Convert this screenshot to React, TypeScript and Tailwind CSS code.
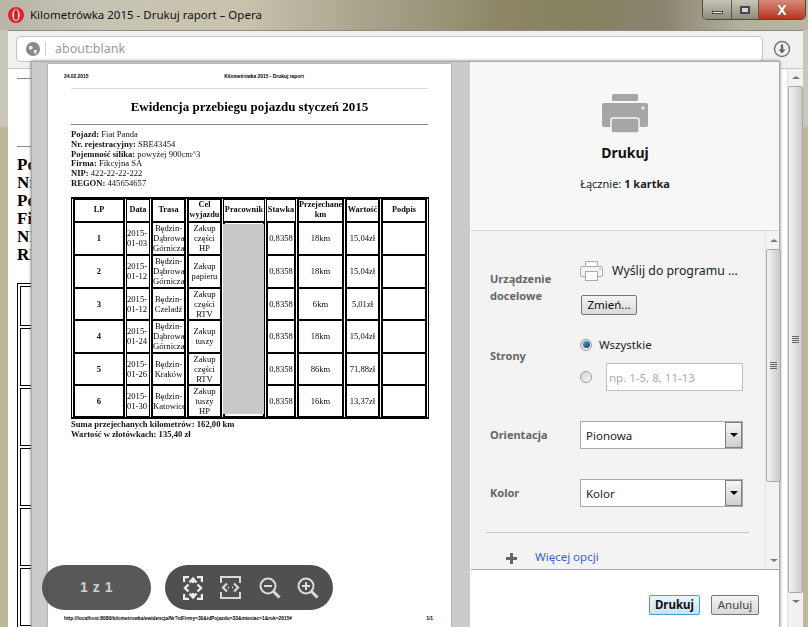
import React from "react";

const rows = [
  ["1", "2015-\n01-03", "Będzin-\nDąbrowa\nGórnicza", "Zakup\nczęści\nHP", "0,8358", "18km", "15,04zł", "h-[33px]"],
  ["2", "2015-\n01-12", "Będzin-\nDąbrowa\nGórnicza", "Zakup\npapieru", "0,8358", "18km", "15,04zł", "h-[33px]"],
  ["3", "2015-\n01-12", "Będzin-\nCzeladź", "Zakup\nczęści\nRTV", "0,8358", "6km", "5,01zł", "h-[32px]"],
  ["4", "2015-\n01-24", "Będzin-\nDąbrowa\nGórnicza", "Zakup\ntuszy", "0,8358", "18km", "15,04zł", "h-[33px]"],
  ["5", "2015-\n01-26", "Będzin-\nKraków", "Zakup\nczęści\nRTV", "0,8358", "86km", "71,88zł", "h-[32px]"],
  ["6", "2015-\n01-30", "Będzin-\nKatowice", "Zakup\ntuszy\nHP", "0,8358", "16km", "13,37zł", "h-[32px]"],
];

const cellCls = "border-x-2 border-y border-black p-0 text-center align-middle whitespace-pre leading-[10px]";
const dataCls = "border-x border-y border-black p-0 text-left align-middle whitespace-pre leading-[10px]";

function PreviewTable() {
  return (
    <div className="relative w-[358px]">
      <table className="w-[358px] table-fixed border-separate [border-spacing:1px_0] border-2 border-x border-black text-[8.6px] text-[#0a0a0a]">
        <colgroup>
          <col className="w-[52px]" />
          <col className="w-[24px]" />
          <col className="w-[35px]" />
          <col className="w-[35px]" />
          <col className="w-[42px]" />
          <col className="w-[30px]" />
          <col className="w-[47px]" />
          <col className="w-[35px]" />
          <col className="w-[46px]" />
        </colgroup>
        <thead>
          <tr className="h-[23px] text-[8.300px] font-bold">
            {["LP", "Data", "Trasa", "Cel\nwyjazdu", "Pracownik", "Stawka", "Przejechane\nkm", "Wartość", "Podpis"].map((h) => (
              <th key={h} className={h === "Data" || h === "Pracownik" || h === "Stawka" ? "border border-black p-0 text-center align-middle whitespace-pre leading-[10px]" : cellCls}>{h}</th>
            ))}
          </tr>
        </thead>
        <tbody>
          {rows.map((r) => (
            <tr key={r[0]} className={r[7]}>
              <td className={cellCls + " font-bold"}>{r[0]}</td>
              <td className={dataCls}>{r[1]}</td>
              <td className={cellCls}>{r[2]}</td>
              <td className={cellCls}>{r[3]}</td>
              <td className={cellCls}></td>
              <td className={cellCls}>{r[4]}</td>
              <td className={cellCls}>{r[5]}</td>
              <td className={cellCls}>{r[6]}</td>
              <td className={cellCls}></td>
            </tr>
          ))}
        </tbody>
      </table>
      <div className="absolute left-[152px] top-[27px] h-[190px] w-[41px] bg-[#c9c9c9] blur-[0.5px]" />
    </div>
  );
}

function FitIcon() {
  return (
    <svg width="20" height="24" viewBox="0 0 20 24" fill="none" stroke="#ececec" strokeWidth="2.400">
      <path d="M1 6V1h5M14 1h5v5M1 18v5h5M14 23h5v-5" />
      <path d="M10 3v4M6.500 6.500 10 2.500l3.500 4M10 21v-4M6.500 17.500l3.500 4 3.500-4" />
      <path d="M5.500 8.500 2 12l3.500 3.500M14.500 8.500 18 12l-3.500 3.500" />
    </svg>
  );
}

function WidthIcon() {
  return (
    <svg width="21" height="23" viewBox="0 0 21 23" fill="none" stroke="#d8d8d8" strokeWidth="2">
      <path d="M1 7V1h19v6M1 16v6h19v-6" />
      <path d="M7 7.500 3 11.500l4 4M14 7.500l4 4-4 4M8 11.500h1M12 11.500h1" strokeWidth="2.200" />
    </svg>
  );
}

function ZoomIcon({ plus }: { plus?: boolean }) {
  return (
    <svg width="22" height="22" viewBox="0 0 22 22" fill="none" stroke="#dcdcdc" strokeWidth="2">
      <circle cx="9" cy="9" r="7.500" />
      <path d="M5 9h8" />
      {plus ? <path d="M9 5v8" /> : null}
      <path d="m14.500 14.500 6 6" strokeWidth="3" />
    </svg>
  );
}

function BigPrinter() {
  return (
    <svg width="46" height="39" viewBox="0 0 46 39">
      <rect x="10" y="0" width="26" height="7" rx="1.500" fill="#a6a6a6" />
      <rect x="0" y="9" width="46" height="24" rx="2" fill="#a6a6a6" />
      <circle cx="41" cy="14" r="1.500" fill="#f0f0f0" />
      <rect x="9" y="24" width="28" height="15" rx="2" fill="#a6a6a6" stroke="#f7f7f7" strokeWidth="1.500" />
    </svg>
  );
}

function SmallPrinter() {
  return (
    <svg width="23" height="22" viewBox="0 0 23 22" fill="none">
      <path d="M5.500 6V1.500h12V6" stroke="#a9a9a9" fill="#fff" />
      <rect x="0.500" y="6.500" width="22" height="10" rx="1.500" fill="#f4f4f4" stroke="#a9a9a9" />
      <rect x="5.500" y="11.500" width="12" height="9" fill="#fff" stroke="#a9a9a9" />
      <circle cx="20" cy="9" r="0.800" fill="#999" />
    </svg>
  );
}

function SelectBox({ value }: { value: string }) {
  return (
    <div className="flex h-[28px] w-[163px] items-center justify-between border border-[#a9a9a9] bg-white pl-[5px] text-[11.500px] text-[#222]">
      <span>{value}</span>
      <span className="flex h-[26px] w-[17px] items-center justify-center border border-[#7e7e7e] bg-gradient-to-b from-[#f6f6f6] to-[#cfcfcf]">
        <span className="h-0 w-0 border-x-[4px] border-t-[4px] border-x-transparent border-t-black" />
      </span>
    </div>
  );
}

function Radio({ on }: { on?: boolean }) {
  return (
    <span className="flex h-[12px] w-[12px] items-center justify-center rounded-full border border-[#9a9a9a] bg-gradient-to-br from-[#d0d0d0] to-[#fafafa]">
      {on ? <span className="h-[7px] w-[7px] rounded-full bg-gradient-to-br from-[#5aa7d6] to-[#0c3f6b]" /> : null}
    </span>
  );
}

function ScrollGrip() {
  return (
    <span className="flex flex-col gap-[1px]">
      <span className="h-[1px] w-[7px] bg-[#666]" />
      <span className="h-[1px] w-[7px] bg-[#666]" />
      <span className="h-[1px] w-[7px] bg-[#666]" />
      <span className="h-[1px] w-[7px] bg-[#666]" />
    </span>
  );
}

function Arrow({ up }: { up?: boolean }) {
  return up ? (
    <span className="h-0 w-0 border-x-[4px] border-b-[3px] border-x-transparent border-b-[#777]" />
  ) : (
    <span className="h-0 w-0 border-x-[4px] border-t-[3px] border-x-transparent border-t-[#777]" />
  );
}

export default function App() {
  return (
    <div className="relative flex h-[627px] w-[808px] flex-col overflow-hidden bg-[linear-gradient(180deg,#c9c6bb_0,#c9c6bb_125px,#bfb79c_128px,#bfb79c_100%)] font-['Noto_Sans',sans-serif]">
      {/* Title bar */}
      <div className="flex h-[30px] items-start justify-between bg-[linear-gradient(90deg,#b9b5a6_0%,#c7c3b4_12%,#c8c3ad_30%,#a9a48c_45%,#8d8768_62%,#85805f_72%,#8a8570_82%,#b4b09c_92%,#bab6a4_100%)] pl-[8px] pr-[2px]">
        <div className="flex h-[30px] items-center gap-[6px]">
          <svg width="16" height="16" viewBox="0 0 16 16">
            <circle cx="8" cy="8" r="8" fill="#e0232e" />
            <ellipse cx="8" cy="8" rx="3.600" ry="6" fill="#fff" />
            <ellipse cx="8" cy="8" rx="2.200" ry="5.200" fill="#d3222c" />
          </svg>
          <span className="text-[11.500px] text-[#111]">Kilometrówka 2015 - Drukuj raport – Opera</span>
        </div>
        <div className="flex h-[20px] w-[104px] overflow-hidden rounded-b-[5px] border border-t-0 border-[#4a4a44]">
          <span className="flex w-[29px] items-end justify-center border-r border-[#5a5a55] bg-gradient-to-b from-[#c9c6b9] to-[#8e8b7c] pb-[5px]">
            <span className="h-[3px] w-[11px] border border-[#444] bg-white" />
          </span>
          <span className="flex w-[27px] items-center justify-center border-r border-[#5a5a55] bg-gradient-to-b from-[#c9c6b9] to-[#8e8b7c]">
            <span className="h-[8px] w-[10px] border-2 border-[#445] bg-[#d5d5d5]" />
          </span>
          <span className="flex flex-1 items-center justify-center bg-gradient-to-b from-[#d58a78] to-[#b9301c] text-[14px] font-bold leading-none text-white [text-shadow:0_0_1px_#333]">
            X
          </span>
        </div>
      </div>

      {/* Browser window */}
      <div className="ml-[8px] mr-[5px] flex flex-1 flex-col">
        <div className="flex h-[38px] items-start gap-[10px] border-t border-[#8c8c84] bg-[#f0f0f0] pl-[8px] pt-[5px]">
          <div className="flex h-[26px] w-[747px] items-center rounded-[4px] border border-[#c4c4c4] bg-white pl-[9px]">
            <svg width="14" height="14" viewBox="0 0 14 14">
              <circle cx="7" cy="7" r="7" fill="#8a8a8a" />
              <path d="M3 4h3l1 2-2 2-2-1zM8 8h3l-1 4-2-1z" fill="#e8e8e8" />
            </svg>
            <span className="ml-[5px] mr-[9px] h-[14px] w-px bg-[#d0d0d0]" />
            <span className="text-[12.500px] text-[#999]">about:blank</span>
          </div>
          <svg className="mt-[4px]" width="18" height="18" viewBox="0 0 18 18" fill="none">
            <circle cx="9" cy="9" r="7.500" stroke="#777" strokeWidth="1.500" />
            <path d="M9 4.500v6" stroke="#666" strokeWidth="2.400" />
            <path d="M5.500 9.500h7L9 13.500z" fill="#666" />
          </svg>
        </div>

        <div className="flex flex-1 overflow-hidden border-t border-[#c8c8c8] bg-white">
          <div className="min-w-0 flex-1 pl-[9px] pt-[9px]">
            <div className="h-px w-[60px] bg-[#888]" />
            <div className="mt-[67px] h-px w-[60px] bg-[#888]" />
            <div className="mt-[9px] whitespace-nowrap font-['Liberation_Serif',serif] text-[17px] font-bold leading-[18px] text-black">
              <div className="h-[18px]">Po</div>
              <div className="h-[18px]">Nr</div>
              <div className="h-[18px]">Po</div>
              <div className="h-[18px]">Fi</div>
              <div className="h-[18px]">NI</div>
              <div className="h-[18px]">RE</div>
            </div>
            <div className="mt-[19px] flex w-[60px] flex-col gap-[2px] border border-black p-[2px] pr-0">
              <div className="h-[40px] border border-black" />
              {[1, 2, 3, 4, 5].map((i) => (
                <div key={i} className="h-[58px] border border-black" />
              ))}
            </div>
          </div>
          <div className="flex w-[16px] flex-col items-center border-l border-[#dedede] bg-[#f1f1f1]">
            <div className="flex h-[17px] items-center"><Arrow up /></div>
            <div className="flex h-[507px] w-[15px] items-center justify-center rounded-[2px] border border-[#a9a9a9] bg-gradient-to-r from-[#f4f4f4] to-[#c9c9c9]">
              <ScrollGrip />
            </div>
            <div className="flex h-[17px] items-center"><Arrow /></div>
          </div>
        </div>
      </div>

      {/* Print dialog */}
      <div className="absolute left-[31px] top-[61px] flex h-[566px] w-[749px] border-l border-t border-r border-[#a8a8a8] shadow-[0_0_3px_#777]">
        <div className="relative w-[438px] overflow-hidden bg-[#cbcbcb] pl-[16px] pt-[2px]">
          <div className="h-[563px] w-[403px] bg-white text-black shadow-[0_0_2px_#888]">
            <div className="flex flex-col items-start pl-[23px] pr-[22px] pt-[10px]">
              <div className="relative flex h-[6px] w-[357px] justify-center font-['Liberation_Sans',sans-serif] text-[4.900px] font-bold leading-[6px]">
                <span className="absolute -left-[7px]">24.02.2015</span>
                <span className="ml-[29px]">Kilometrówka 2015 - Drukuj raport</span>
              </div>
              <div className="mt-[8px] h-px w-[357px] bg-[#ddd]" />
              <div className="font-['Liberation_Serif',serif] blur-[0.3px]">
                <div className="mt-[9px] w-[357px] text-center text-[13px] font-bold leading-[18px]">
                  Ewidencja przebiegu pojazdu styczeń 2015
                </div>
                <div className="mt-[8px] h-px w-[357px] bg-[#888]" />
                <div className="mt-[5px] text-[8.600px] leading-[9.800px] text-[#111]">
                  <div><b>Pojazd:</b> Fiat Panda</div>
                  <div><b>Nr. rejestracyjny:</b> SBE43454</div>
                  <div><b>Pojemność silika:</b> powyżej 900cm^3</div>
                  <div><b>Firma:</b> Fikcyjna SA</div>
                  <div><b>NIP:</b> 422-22-22-222</div>
                  <div><b>REGON:</b> 445654657</div>
                </div>
                <div className="mt-[8px]"><PreviewTable /></div>
                <div className="text-[8.600px] font-bold leading-[10px] text-[#111]">
                  <div>Suma przejechanych kilometrów: <span>162,00 km</span></div>
                  <div>Wartość w złotówkach: 135,40 zł</div>
                </div>
              </div>
            </div>
          </div>
          <div className="absolute bottom-[5px] left-[16px] flex w-[403px] justify-between whitespace-nowrap pl-[16px] pr-[18px] font-['Liberation_Sans',sans-serif] text-[4.850px] font-bold leading-[6px] text-black">
            <span>http://localhost:8080/kilometrowka/ewidencja/Nr?idFirmy=30&amp;idPojazdu=33&amp;miesiac=1&amp;rok=2015#</span>
            <span>1/1</span>
          </div>
          <div className="absolute bottom-[17px] left-[10px] flex items-center gap-[14px]">
            <div className="flex h-[45px] w-[109px] items-center justify-center rounded-[23px] bg-[#4f4f4f]/95 font-['Liberation_Sans',sans-serif] text-[14px] font-bold tracking-[0.500px] text-[#d0d0d0]">
              1 z 1
            </div>
            <div className="flex h-[45px] w-[168px] items-center rounded-[23px] bg-[#505050] pl-[18px]">
              <FitIcon />
              <span className="ml-[17px] flex"><WidthIcon /></span>
              <span className="ml-[18px] flex"><ZoomIcon /></span>
              <span className="ml-[16px] flex"><ZoomIcon plus /></span>
            </div>
          </div>
        </div>

        <div className="flex w-[309px] flex-col border-l border-white bg-[#f3f3f3] text-[#222]">
          <div className="flex h-[169px] flex-col items-center border-b border-[#d6d6d6] bg-[#f7f7f7] pt-[32px]">
            <BigPrinter />
            <div className="mt-[10px] text-[14px] font-bold leading-[20px] text-[#111]">Drukuj</div>
            <div className="mt-[13px] text-[11px] leading-[16px] text-[#222]">
              Łącznie: <b>1 kartka</b>
            </div>
          </div>
          <div className="flex h-[339px] border-b border-[#a9a9a9]">
            <div className="flex-1 pl-[15px] pr-[16px]">
              <div className="grid grid-cols-[90px_1fr] items-start pl-[4px] pt-[29px]">
                <div className="pt-[10px] text-[11px] font-bold leading-[17px] text-[#666]">Urządzenie<br />docelowe</div>
                <div>
                  <div className="flex items-center gap-[9px]">
                    <SmallPrinter />
                    <span className="text-[12.300px] text-[#222]">Wyślij do programu ...</span>
                  </div>
                  <div className="ml-[1px] mt-[13px] flex h-[20px] w-[56px] items-center justify-center rounded-[2px] border border-[#777] bg-gradient-to-b from-[#f3f3f3] to-[#d9d9d9] text-[11.500px] text-[#111]">
                    Zmień...
                  </div>
                </div>
              </div>
              <div className="grid grid-cols-[90px_1fr] items-center pl-[4px] pt-[21px]">
                <div className="pb-[15px] text-[11px] font-bold text-[#666]">Strony</div>
                <div>
                  <div className="flex items-center gap-[7px]">
                    <Radio on />
                    <span className="text-[11.500px] text-[#222]">Wszystkie</span>
                  </div>
                  <div className="mt-[10px] flex items-center gap-[14px]">
                    <Radio />
                    <div className="flex h-[28px] w-[137px] items-center border border-[#bdbdbd] bg-white pl-[2px] text-[11.500px] text-[#aaa]">
                      np. 1-5, 8, 11-13
                    </div>
                  </div>
                </div>
              </div>
              <div className="mt-[30px] grid grid-cols-[90px_1fr] items-center pl-[4px]">
                <div className="text-[11px] font-bold text-[#666]">Orientacja</div>
                <SelectBox value="Pionowa" />
              </div>
              <div className="mt-[30px] grid grid-cols-[90px_1fr] items-center pl-[4px]">
                <div className="text-[11px] font-bold text-[#666]">Kolor</div>
                <SelectBox value="Kolor" />
              </div>
              <div className="mt-[25px] h-px w-[263px] bg-[#c4c4c4]" />
              <div className="mt-[15px] flex items-center pl-[20px]">
                <svg width="11" height="11" viewBox="0 0 11 11" className="mt-[3px]">
                  <path d="M4 0h3v4h4v3H7v4H4V7H0V4h4z" fill="#666" />
                </svg>
                <span className="ml-[18px] text-[11.500px] text-[#3b5fd0]">Więcej opcji</span>
              </div>
            </div>
            <div className="flex w-[16px] flex-col items-center border-l border-[#e2e2e2]">
              <div className="flex h-[18px] items-center"><Arrow up /></div>
              <div className="flex h-[233px] w-[15px] items-center justify-center rounded-[2px] border border-[#a9a9a9] bg-gradient-to-r from-[#f4f4f4] to-[#c9c9c9]">
                <ScrollGrip />
              </div>
              <div className="flex-1" />
              <div className="flex h-[18px] items-center"><Arrow /></div>
            </div>
          </div>
          <div className="flex flex-1 items-start justify-end gap-[11px] bg-white pr-[20px] pt-[25px]">
            <div className="flex h-[20px] w-[51px] items-center justify-center rounded-[2px] border border-[#3c9fd0] bg-gradient-to-b from-[#eef6fb] to-[#cfe0ea] text-[11.500px] font-bold text-[#111]">
              Drukuj
            </div>
            <div className="flex h-[20px] w-[48px] items-center justify-center rounded-[2px] border border-[#777] bg-gradient-to-b from-[#f3f3f3] to-[#d9d9d9] text-[11.500px] text-[#444]">
              Anuluj
            </div>
          </div>
        </div>
      </div>
    </div>
  );
}
